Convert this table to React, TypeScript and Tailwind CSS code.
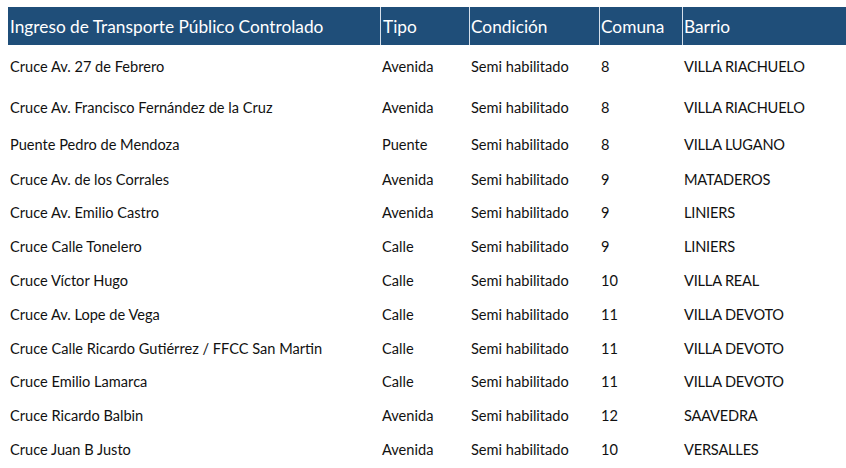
const rows = [
  { nombre: 'Cruce Av. 27 de Febrero', tipo: 'Avenida', comuna: '8', barrio: 'VILLA RIACHUELO', h: 'h-[42px]' },
  { nombre: 'Cruce Av. Francisco Fernández de la Cruz', tipo: 'Avenida', comuna: '8', barrio: 'VILLA RIACHUELO', h: 'h-[40px]' },
  { nombre: 'Puente Pedro de Mendoza', tipo: 'Puente', comuna: '8', barrio: 'VILLA LUGANO', h: 'h-[35px]' },
  { nombre: 'Cruce Av. de los Corrales', tipo: 'Avenida', comuna: '9', barrio: 'MATADEROS', h: 'h-[34px]' },
  { nombre: 'Cruce Av. Emilio Castro', tipo: 'Avenida', comuna: '9', barrio: 'LINIERS', h: 'h-[33px]' },
  { nombre: 'Cruce Calle Tonelero', tipo: 'Calle', comuna: '9', barrio: 'LINIERS', h: 'h-[34px]' },
  { nombre: 'Cruce Víctor Hugo', tipo: 'Calle', comuna: '10', barrio: 'VILLA REAL', h: 'h-[34px]' },
  { nombre: 'Cruce Av. Lope de Vega', tipo: 'Calle', comuna: '11', barrio: 'VILLA DEVOTO', h: 'h-[34px]' },
  { nombre: 'Cruce Calle Ricardo Gutiérrez / FFCC San Martin', tipo: 'Calle', comuna: '11', barrio: 'VILLA DEVOTO', h: 'h-[34px]' },
  { nombre: 'Cruce Emilio Lamarca', tipo: 'Calle', comuna: '11', barrio: 'VILLA DEVOTO', h: 'h-[33px]' },
  { nombre: 'Cruce Ricardo Balbin', tipo: 'Avenida', comuna: '12', barrio: 'SAAVEDRA', h: 'h-[34px]' },
  { nombre: 'Cruce Juan B Justo', tipo: 'Avenida', comuna: '10', barrio: 'VERSALLES', h: 'h-[34px]' },
];

const cols = 'grid grid-cols-[372px_89px_130px_83px_160px]';

export default function App() {
  return (
    <div className="w-[846px] h-[468px] overflow-hidden bg-white pt-[7px] pl-[8px] font-['Lato',sans-serif] text-[#111]">
      <div className={`${cols} h-[38px] bg-[#1f4e79] text-white text-[17.3px] leading-none`}>
        <div className="flex items-center pl-[2px] pt-[2px]">Ingreso de Transporte Público Controlado</div>
        <div className="flex items-center pl-[2px] pt-[2px] border-l border-[#d6dfea]">Tipo</div>
        <div className="flex items-center pl-[1px] pt-[2px] border-l border-[#d6dfea]">Condición</div>
        <div className="flex items-center pl-[1px] pt-[2px] border-l border-[#d6dfea]">Comuna</div>
        <div className="flex items-center pl-[1px] pt-[2px] border-l border-[#d6dfea]">Barrio</div>
      </div>
      {rows.map((r) => (
        <div key={r.nombre} className={`${cols} ${r.h} items-center pt-[2px] text-[14.6px] leading-none`}>
          <div className="pl-[2px]">{r.nombre}</div>
          <div className="pl-[2px]">{r.tipo}</div>
          <div className="pl-[2px]">Semi habilitado</div>
          <div className="pl-[2px]">{r.comuna}</div>
          <div className="pl-[2px] tracking-[-0.2px]">{r.barrio}</div>
        </div>
      ))}
    </div>
  );
}
